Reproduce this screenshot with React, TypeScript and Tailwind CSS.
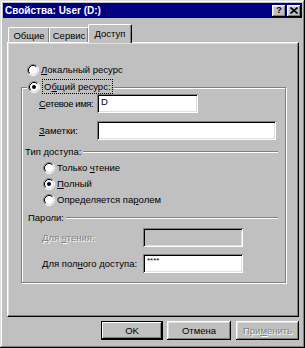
import React from "react";

const raised =
  "shadow-[inset_-1px_-1px_#000,inset_1px_1px_#fff,inset_-2px_-2px_#808080,inset_2px_2px_#dfdfdf]";
const sunken =
  "shadow-[inset_1px_1px_#808080,inset_-1px_-1px_#fff,inset_2px_2px_#000,inset_-2px_-2px_#dfdfdf]";
const disabledText = "text-[#808080] [text-shadow:1px_1px_0_#fff]";

function Radio({ checked }: { checked?: boolean }) {
  return (
    <svg width="12" height="12" viewBox="0 0 12 12" className="shrink-0">
      <circle cx="6" cy="6" r="4.5" fill="#fff" />
      <path d="M2.11 9.89 A5.5 5.5 0 0 1 9.89 2.11" fill="none" stroke="#808080" strokeWidth="1" />
      <path d="M9.89 2.11 A5.5 5.5 0 0 1 2.11 9.89" fill="none" stroke="#fff" strokeWidth="1" />
      <path d="M2.82 9.18 A4.5 4.5 0 0 1 9.18 2.82" fill="none" stroke="#000" strokeWidth="1" />
      <path d="M9.18 2.82 A4.5 4.5 0 0 1 2.82 9.18" fill="none" stroke="#dfdfdf" strokeWidth="1" />
      {checked && <circle cx="6" cy="6" r="2" fill="#000" />}
    </svg>
  );
}

function Input({ w, value, disabled, small }: { w: string; value?: string; disabled?: boolean; small?: boolean }) {
  return (
    <div
      className={`${w} h-[19px] shrink-0 ${sunken} ${disabled ? "bg-[#c0c0c0]" : "bg-white"} pl-[4px] pt-[3px] leading-none ${small ? "text-[8px]" : ""}`}
    >
      {value}
    </div>
  );
}

export default function App() {
  return (
    <div
      className="w-[305px] h-[348px] bg-[#c0c0c0] p-[3px] text-black text-[9.5px] shadow-[inset_-1px_-1px_#000,inset_1px_1px_#dfdfdf,inset_-2px_-2px_#808080,inset_2px_2px_#fff]"
      style={{ fontFamily: '"Liberation Sans", Arial, sans-serif' }}
    >
      {/* Title bar */}
      <div className="h-[15px] bg-[#000080] flex items-center pl-[2px] pr-[1px]">
        <span className="text-white font-bold text-[10px] leading-none whitespace-nowrap">Свойства: User (D:)</span>
        <div className="ml-auto flex items-center gap-[1px]">
          <div className={`w-[14px] h-[12px] bg-[#c0c0c0] ${raised} flex items-center justify-center font-bold text-[9px] leading-none`}>
            ?
          </div>
          <div className={`w-[14px] h-[12px] bg-[#c0c0c0] ${raised} flex items-center justify-center`}>
            <svg width="8" height="7" viewBox="0 0 8 7">
              <path d="M0.5 0.5 L7.5 6.5 M7.5 0.5 L0.5 6.5" stroke="#000" strokeWidth="1.6" />
            </svg>
          </div>
        </div>
      </div>

      {/* Tabs */}
      <div className="mt-[6px] h-[18px] flex items-end pl-[5px]">
        <div className="w-[41px] h-[15px] bg-[#c0c0c0] border-l border-t border-white rounded-tl-[2px] shadow-[inset_-1px_0_#808080] flex items-center justify-center leading-none pt-[1px]">
          Общие
        </div>
        <div className="w-[40px] h-[15px] bg-[#c0c0c0] border-l border-t border-r border-l-white border-t-white border-r-black rounded-t-[2px] shadow-[inset_-1px_0_#808080] flex items-center justify-center leading-none pt-[1px]">
          Сервис
        </div>
        <div className="relative z-10 -mb-[1px] -ml-[1px] w-[44px] h-[19px] bg-[#c0c0c0] border-l border-t border-r border-l-white border-t-white border-r-black rounded-t-[2px] shadow-[inset_-1px_0_#808080] flex items-start justify-center leading-none pt-[4px]">
          Доступ
        </div>
      </div>

      {/* Panel */}
      <div className="ml-[4px] w-[292px] h-[275px] bg-[#c0c0c0] border-t border-l border-r border-b border-t-white border-l-white border-r-black border-b-black shadow-[inset_-1px_-1px_#808080,inset_1px_1px_#dfdfdf] pt-[20px]">
        <div className="h-[13px] flex items-center ml-[19px] gap-[2px]">
          <Radio />
          <span className="leading-none whitespace-nowrap">
            <u>Л</u>окальный ресурс
          </span>
        </div>

        {/* Group box */}
        <div className="relative mt-[11px] ml-[13px] w-[265px] h-[196px] border border-[#808080] shadow-[inset_1px_1px_#fff,1px_1px_#fff]">
          <div className="absolute -top-[9px] left-[5px] h-[15px] bg-[#c0c0c0] flex items-center pl-[1px] pr-[1px] gap-[2px]">
            <Radio checked />
            <span className="h-[15px] border border-dotted border-black px-[1px] flex items-center leading-none whitespace-nowrap">
              О<u>б</u>щий ресурс:
            </span>
          </div>

          <div className="mt-[6px] flex items-center">
            <span className="ml-[17px] w-[58px] shrink-0 leading-none whitespace-nowrap tracking-[-0.4px]">
              <u>С</u>етевое имя:
            </span>
            <Input w="w-[101px]" value="D" />
          </div>

          <div className="mt-[8px] flex items-center">
            <span className="ml-[17px] w-[58px] shrink-0 leading-none whitespace-nowrap">
              <u>З</u>аметки:
            </span>
            <Input w="w-[179px]" />
          </div>

          <div className="mt-[5px] ml-[3px] w-[253px] h-[13px] flex items-center">
            <span className="leading-none whitespace-nowrap">Тип доступа:</span>
            <div className="ml-[2px] flex-1 h-[2px] border-t border-b border-t-[#808080] border-b-white" />
          </div>

          <div className="mt-[3px] ml-[21px] h-[13px] flex items-center gap-[2px]">
            <Radio />
            <span className="leading-none whitespace-nowrap">
              Только <u>ч</u>тение
            </span>
          </div>
          <div className="mt-[3px] ml-[21px] h-[13px] flex items-center gap-[2px]">
            <Radio checked />
            <span className="leading-none whitespace-nowrap">
              <u>П</u>олный
            </span>
          </div>
          <div className="mt-[3px] ml-[21px] h-[13px] flex items-center gap-[2px]">
            <Radio />
            <span className="leading-none whitespace-nowrap">
              Определяется па<u>р</u>олем
            </span>
          </div>

          <div className="mt-[5px] ml-[6px] w-[250px] h-[13px] flex items-center">
            <span className="leading-none whitespace-nowrap">Пароли:</span>
            <div className="ml-[2px] flex-1 h-[2px] border-t border-b border-t-[#808080] border-b-white" />
          </div>

          <div className="mt-[4px] flex items-center">
            <span className={`ml-[20px] w-[101px] shrink-0 leading-none whitespace-nowrap ${disabledText}`}>
              Для <u>ч</u>тения:
            </span>
            <Input w="w-[100px]" disabled />
          </div>

          <div className="mt-[7px] flex items-center">
            <span className="ml-[20px] w-[101px] shrink-0 leading-none whitespace-nowrap">
              Для пол<u>н</u>ого доступа:
            </span>
            <Input w="w-[100px]" value="****" small />
          </div>
        </div>
      </div>

      {/* Buttons */}
      <div className="mt-[4px] flex justify-end pr-[3px]">
        <div className="w-[62px] h-[19px] border border-black bg-[#c0c0c0] shadow-[inset_-1px_-1px_#000,inset_1px_1px_#fff,inset_-2px_-2px_#808080] flex items-center justify-center leading-none">
          OK
        </div>
        <div className={`ml-[4px] w-[64px] h-[19px] bg-[#c0c0c0] ${raised} flex items-center justify-center leading-none`}>
          Отмена
        </div>
        <div className={`ml-[5px] w-[63px] h-[19px] bg-[#c0c0c0] ${raised} flex items-center justify-center leading-none ${disabledText}`}>
          При<u>м</u>енить
        </div>
      </div>
    </div>
  );
}
